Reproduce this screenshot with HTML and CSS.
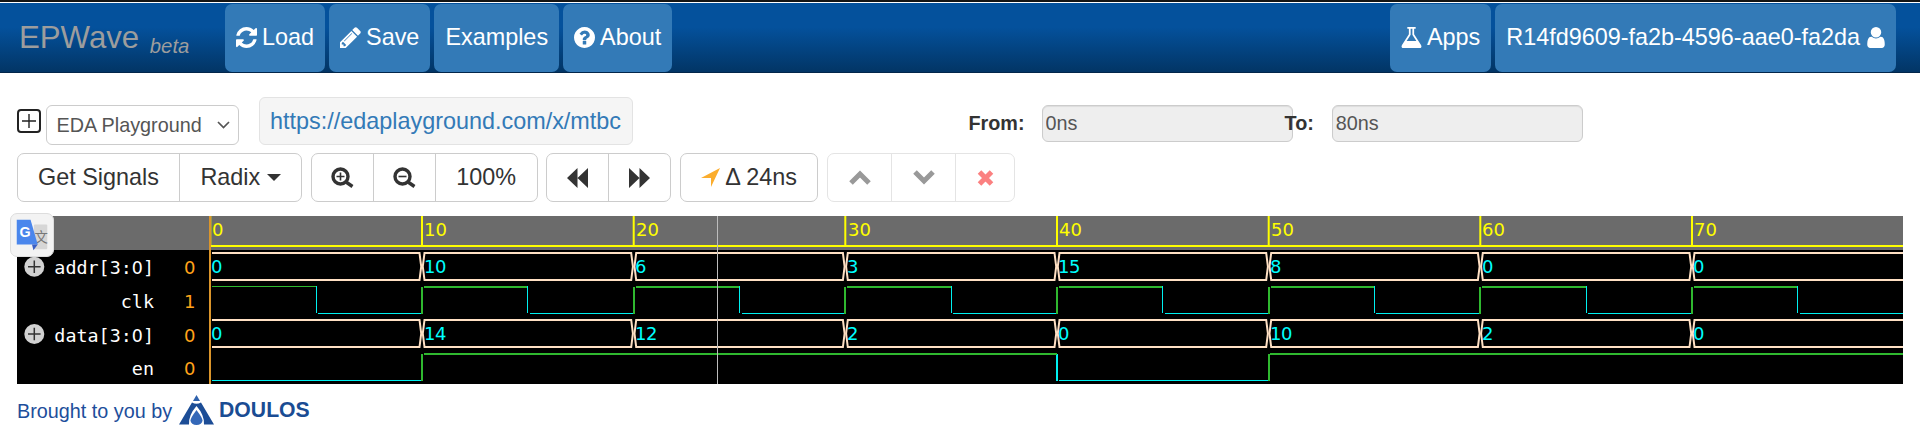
FILE: index.html
```html
<!DOCTYPE html>
<html lang="en">
<head>
    <meta charset="UTF-8">
    <title>EPWave</title>
    <link rel="stylesheet" href="styles.css">
</head>
<body>
    <div class="top-strip"></div>
    <nav class="navbar">
        <a class="brand">EPWave <small>beta</small></a>
        <a class="nav-btn"><svg class="ico" viewBox="128 128 1536 1536"><path d="M1639 1056q0 5-1 7-64 268-268 434.500t-478 166.500q-146 0-282.500-55t-243.500-157l-129 129q-19 19-45 19t-45-19-19-45v-448q0-26 19-45t45-19h448q26 0 45 19t19 45-19 45l-137 137q71 66 161 102t187 36q134 0 250-65t186-179q11-17 53-117 8-23 30-23h192q13 0 22.500 9.500t9.500 22.500zm25-800v448q0 26-19 45t-45 19h-448q-26 0-45-19t-19-45 19-45l138-138q-148-137-349-137-134 0-250 65t-186 179q-11 17-53 117-8 23-30 23h-199q-13 0-22.500-9.500t-9.500-22.500v-7q65-268 270-434.500t480-166.500q146 0 284 55.500t245 156.500l130-129q19-19 45-19t45 19 19 45z"/></svg>Load</a>
        <a class="nav-btn"><svg class="ico" viewBox="128 128 1536 1536"><path d="M491 1536l91-91-235-235-91 91v107h128v128h107zm523-928q0-22-22-22-10 0-17 7l-542 542q-7 7-7 17 0 22 22 22 10 0 17-7l542-542q7-7 7-17zm-54-192l416 416-832 832h-416v-416zm683 96q0 53-37 90l-166 166-416-416 166-165q36-38 90-38 53 0 91 38l235 234q37 39 37 91z"/></svg>Save</a>
        <a class="nav-btn">Examples</a>
        <a class="nav-btn"><svg class="ico" viewBox="128 128 1536 1536"><path d="M1024 1376v-192q0-14-9-23t-23-9h-192q-14 0-23 9t-9 23v192q0 14 9 23t23 9h192q14 0 23-9t9-23zm256-672q0-88-55.500-163t-138.500-116-170-41q-243 0-371 213-15 24 8 42l132 100q7 6 19 6 16 0 25-12 53-68 86-92 34-24 86-24 48 0 85.500 26t37.500 59q0 38-20 61t-68 45q-63 28-115.500 86.500t-52.500 125.500v36q0 14 9 23t23 9h192q14 0 23-9t9-23q0-19 21.500-49.500t54.500-49.500q32-18 49-28.500t46-35 44.500-48 28-60.500 12.500-81zm384 192q0 209-103 385.500t-279.500 279.500-385.500 103-385.500-103-279.500-279.500-103-385.500 103-385.500 279.500-279.500 385.500-103 385.500 103 279.500 279.500 103 385.500z"/></svg>About</a>
        <div class="nav-right">
            <a class="nav-btn"><svg class="ico" viewBox="128 128 1536 1536"><path d="M1591 1448q56 89 21.500 152.500t-140.500 63.500h-1152q-106 0-140.500-63.500t21.500-152.500l503-793v-399h-64q-26 0-45-19t-19-45 19-45 45-19h512q26 0 45 19t19 45-19 45-45 19h-64v399zm-779-725l-272 429h712l-272-429-20-31v-436h-128v436z"/></svg>Apps</a>
            <a class="nav-btn user-btn">R14fd9609-fa2b-4596-aae0-fa2da<svg class="ico ico-user" viewBox="256 128 1280 1536"><path d="M1536 1399q0 109-62.500 187t-150.500 78h-854q-88 0-150.500-78t-62.500-187q0-85 8.500-160.500t31.500-152 58.500-131 94-89 134.500-34.500q131 128 313 128t313-128q76 0 134.500 34.500t94 89 58.500 131 31.500 152 8.500 160.500zm-256-887q0 159-112.500 271.500t-271.500 112.500-271.500-112.500-112.500-271.500 112.500-271.500 271.500-112.500 271.500 112.500 112.500 271.500z"/></svg></a>
        </div>
    </nav>

    <div class="content">
        <div class="load-row">
            <svg class="add-box" viewBox="0 0 24 24"><rect x="1" y="1" width="22" height="22" rx="3"/><path d="M12 5v14M5 12h14"/></svg>
            <select class="source">
                <option>EDA Playground</option>
            </select>
            <div class="share-url"><a>https://edaplayground.com/x/mtbc</a></div>
            <label class="range-label from-label">From:</label>
            <input class="range-input" type="text" value="0ns" readonly>
            <label class="range-label to-label">To:</label>
            <input class="range-input" type="text" value="80ns" readonly>
        </div>

        <div class="toolbar">
            <div class="btn-group">
                <button class="signals-btn">Get Signals</button>
                <button>Radix <span class="caret"></span></button>
            </div>
            <div class="btn-group">
                <button class="zoom-btn"><svg class="tool-ico" viewBox="0 0 23 21"><circle cx="9.500" cy="9.500" r="7.500"/><path class="thin" d="M9.500 5.500v8M5.500 9.500h8"/><path d="M15 15l6.500 4.500"/></svg></button>
                <button class="zoom-btn"><svg class="tool-ico" viewBox="0 0 23 21"><circle cx="9.500" cy="9.500" r="7.500"/><path class="thin" d="M5.500 9.500h8"/><path d="M15 15l6.500 4.500"/></svg></button>
                <button>100%</button>
            </div>
            <div class="btn-group">
                <button class="skip-btn"><svg class="skip-ico" viewBox="0 0 21 20"><path d="M10.500 0v20L0 10zM21 0v20L10.500 10z"/></svg></button>
                <button class="skip-btn"><svg class="skip-ico" viewBox="0 0 21 20"><path d="M0 0v20l10.500-10zM10.500 0v20L21 10z"/></svg></button>
            </div>
            <div class="btn-group">
                <button><svg class="send-ico" viewBox="0 0 19 19"><path d="M19 0L0 10h10v9z"/></svg>&Delta; 24ns</button>
            </div>
            <div class="btn-group disabled">
                <button><svg class="chev-ico" viewBox="0 0 22 15"><path d="M2 13l9-9 9 9"/></svg></button>
                <button><svg class="chev-ico" viewBox="0 0 22 15"><path d="M2 2l9 9 9-9"/></svg></button>
                <button><svg class="cross-ico" viewBox="0 0 17 16"><path d="M2.500 2l12 12M14.500 2l-12 12"/></svg></button>
            </div>
        </div>

        <div class="wave-wrap">
            <svg class="wave" width="1886" height="168" viewBox="17 216 1886 168">
                <defs>
                    <g id="ticks">
                        <rect x="-1" y="216" width="2" height="30"/>
                        <path d="M21.200 236v9M42.300 236v9M63.500 236v9M84.700 236v9M105.800 236v9M127 236v9M148.200 236v9M169.300 236v9M190.500 236v9"/>
                    </g>
                    <g id="seg" class="bus">
                        <path d="M2.500 253H209.200L210.900 266.500 209.200 280H2.500L.8 266.500z"/>
                    </g>
                    <g id="seg-first" class="bus">
                        <path d="M212 253H419.500L421.200 266.500 419.500 280H212"/>
                    </g>
                    <g id="seg-last" class="bus">
                        <path d="M1903 253H1694.500L1692.800 266.500 1694.500 280H1903"/>
                    </g>
                    <g id="clk">
                        <path class="sig-hi" d="M0 287v27M2 286.500H105.800"/>
                        <path class="sig-lo" d="M105.800 286v27M107.800 313.500H211.700"/>
                    </g>
                </defs>

                <rect class="ruler-bg" x="17" y="216" width="1886" height="34"/>
                <rect class="wave-bg" x="17" y="250" width="1886" height="134"/>

                <!-- ruler -->
                <g class="ruler">
                    <rect x="210" y="245" width="1693" height="2"/>
                    <use href="#ticks" x="210.300"/><use href="#ticks" x="422"/><use href="#ticks" x="633.700"/><use href="#ticks" x="845.300"/>
                    <use href="#ticks" x="1057"/><use href="#ticks" x="1268.700"/><use href="#ticks" x="1480.300"/><use href="#ticks" x="1692"/>
                    <text x="212" y="236">0</text><text x="424" y="236">10</text><text x="636" y="236">20</text><text x="848" y="236">30</text>
                    <text x="1059" y="236">40</text><text x="1271" y="236">50</text><text x="1482" y="236">60</text><text x="1694" y="236">70</text>
                </g>

                <!-- signal names and values at the cursor -->
                <g class="expand">
                    <circle cx="34.300" cy="266.700" r="10"/><path d="M28 266.700h12.600M34.300 260.500v12.500"/>
                    <circle cx="34.300" cy="334" r="10"/><path d="M28 334h12.600M34.300 327.700v12.500"/>
                </g>
                <g class="sig-name">
                    <text x="154" y="274">addr[3:<tspan class="plain-zero">0</tspan>]</text>
                    <text x="154" y="308">clk</text>
                    <text x="154" y="342">data[3:<tspan class="plain-zero">0</tspan>]</text>
                    <text x="154" y="375">en</text>
                </g>
                <g class="sig-val">
                    <text x="184" y="274">0</text>
                    <text x="184" y="308">1</text>
                    <text x="184" y="342">0</text>
                    <text x="184" y="375">0</text>
                </g>

                <!-- addr[3:0] -->
                <use href="#seg-first"/><use href="#seg" x="422"/><use href="#seg" x="633.700"/><use href="#seg" x="845.300"/>
                <use href="#seg" x="1057"/><use href="#seg" x="1268.700"/><use href="#seg" x="1480.300"/><use href="#seg-last"/>
                <g class="bus-val">
                    <text x="211" y="273">0</text><text x="424" y="273">10</text><text x="635" y="273">6</text><text x="847" y="273">3</text>
                    <text x="1058" y="273">15</text><text x="1270" y="273">8</text><text x="1482" y="273">0</text><text x="1693" y="273">0</text>
                </g>

                <!-- clk -->
                <path class="sig-hi" d="M212 286.500H316"/>
                <path class="sig-lo" d="M316 286v27M318 313.500H422"/>
                <use href="#clk" x="422"/><use href="#clk" x="633.700"/><use href="#clk" x="845.300"/><use href="#clk" x="1057"/>
                <use href="#clk" x="1268.700"/><use href="#clk" x="1480.300"/><use href="#clk" x="1692"/>

                <!-- data[3:0] -->
                <g transform="translate(0 67)">
                    <use href="#seg-first"/><use href="#seg" x="422"/><use href="#seg" x="633.700"/><use href="#seg" x="845.300"/>
                    <use href="#seg" x="1057"/><use href="#seg" x="1268.700"/><use href="#seg" x="1480.300"/><use href="#seg-last"/>
                    <g class="bus-val">
                        <text x="211" y="273">0</text><text x="424" y="273">14</text><text x="635" y="273">12</text><text x="847" y="273">2</text>
                        <text x="1058" y="273">0</text><text x="1270" y="273">10</text><text x="1482" y="273">2</text><text x="1693" y="273">0</text>
                    </g>
                </g>

                <!-- en -->
                <path class="sig-lo" d="M212 380.500H422M1059 380.500H1268.700"/>
                <path class="sig-lo wide" d="M1057 354v27"/>
                <path class="sig-hi wide" d="M422 354v27M1268.700 354v27"/>
                <path class="sig-hi wide" d="M424 354H1057M1270 354H1903"/>

                <rect class="zero-line" x="209" y="216" width="2" height="168"/>
                <rect class="cursor" x="717" y="216" width="1" height="168"/>
            </svg>

            <div class="translate-badge">
                <svg viewBox="0 0 44 44" width="42" height="42">
                    <rect x="24" y="11" width="14" height="26" rx="1" fill="#d6d6d6"/>
                    <text class="wen" x="24.500" y="29">文</text>
                    <path d="M6 6h14.500L28 32H6z" fill="#4a86ec"/>
                    <path d="M22 32h6l-4.500 6z" fill="#3a5fc4"/>
                    <text class="gee" x="9" y="24">G</text>
                </svg>
            </div>
        </div>

        <div class="credit">
            <span class="credit-text">Brought to you by</span>
            <svg class="logo" viewBox="0 0 35 30">
                <path d="M17.500 0L14 6h7z" fill="#2f62ad"/>
                <path d="M13 7.500L0 29.500h10Q9.500 20 17.500 11 25.500 20 25 29.500h10L22 7.500Q17.500 10 13 7.500z" fill="#1c4d96"/>
                <path d="M17.500 15Q11.500 23 11.500 25.500A6 4.500 0 0 0 23.500 25.500Q23.500 23 17.500 15z" fill="#3468b8"/>
            </svg>
            <span class="logo-word">DOULOS</span>
        </div>
    </div>
</body>
</html>
```

FILE: styles.css
```css
body {
    margin: 0;
    font-family: "Liberation Sans", Arial, sans-serif;
    font-size: 18.2px;
    color: #333;
    background: #fff;
    overflow: hidden;
}
.top-strip {
    height: 1px;
    background: #fff;
    border-top: 2px solid #151515;
}

/* navbar */
.navbar {
    display: flex;
    height: 68px;
    padding-top: 1px;
    gap: 4px;
    background: linear-gradient(#04519c 0%, #04519c 35%, #023565 100%);
    border-bottom: 1px solid #02264a;
}
.brand {
    width: 221px;
    padding: 16px 0 0 19px;
    box-sizing: border-box;
    font-size: 31.2px;
    color: #9d9d9d;
}
.brand small {
    position: relative;
    top: 5px;
    font-size: 20.3px;
    font-style: italic;
    margin-left: 2px;
}
.nav-btn {
    display: flex;
    align-items: center;
    padding: 0 11px 2px;
    background: #337ab7;
    color: #fff;
    font-size: 23.4px;
    border-radius: 7px;
}
.ico {
    width: 21px;
    height: 21px;
    fill: currentColor;
    margin-right: 5px;
}
.ico-user {
    width: 18px;
    margin: 0 0 0 7px;
}
.nav-right {
    display: flex;
    gap: 4px;
    margin-left: auto;
    margin-right: 24px;
}
.user-btn {
    padding-right: 11px;
}

/* main area */
.content {
    padding-left: 17px;
    width: 1886px;
}
.load-row {
    display: flex;
    align-items: flex-end;
    height: 48px;
    margin-top: 24px;
}
.add-box {
    width: 24px;
    height: 24px;
    margin-bottom: 12px;
    fill: none;
    stroke: #222;
}
.add-box rect {
    stroke-width: 2px;
}
.add-box path {
    stroke-width: 1.4px;
}
.source {
    width: 193px;
    height: 40px;
    margin-left: 4.5px;
    padding-left: 10px;
    appearance: none;
    background: #fff url("data:image/svg+xml,%3Csvg xmlns='http://www.w3.org/2000/svg' width='13' height='8'%3E%3Cpath d='M1 1l5.500 5.500L12 1' fill='none' stroke='%23555' stroke-width='1.700'/%3E%3C/svg%3E") no-repeat right 8px center;
    border: 1px solid #ccc;
    border-radius: 6px;
    color: #555;
    font: 19.8px "Liberation Sans", Arial, sans-serif;
}
.share-url {
    width: 374px;
    height: 48px;
    box-sizing: border-box;
    margin-left: 20.5px;
    padding: 0 10px;
    line-height: 46px;
    font-size: 23.4px;
    white-space: nowrap;
    background: #f5f5f5;
    border: 1px solid #e3e3e3;
    border-radius: 6px;
}
.share-url a {
    color: #337ab7;
}
.range-label {
    align-self: flex-start;
    margin-top: 15px;
    font-size: 19.8px;
    font-weight: bold;
    position: relative;
}
.from-label {
    margin-left: 335.5px;
}
.to-label {
    margin-left: -8px;
}
.range-input {
    width: 251px;
    height: 37px;
    box-sizing: border-box;
    margin: 0 0 3px 17px;
    padding: 0 3px;
    color: #555;
    font: 19.8px "Liberation Sans", Arial, sans-serif;
    background: #eee;
    border: 1px solid #ccc;
    border-radius: 6px;
    box-shadow: inset 0 1px 1px rgba(0, 0, 0, .075);
    outline: none;
}
.to-label + .range-input {
    width: 251px;
    margin-left: 18px;
}

/* toolbar */
.toolbar {
    display: flex;
    gap: 8.6px;
    margin-top: 8px;
}
.btn-group {
    display: flex;
    height: 49px;
    box-sizing: border-box;
    border: 1px solid #ccc;
    border-radius: 7px;
    background: #fff;
}
.btn-group button {
    display: flex;
    align-items: center;
    padding: 0 20.5px;
    font: 23.4px "Liberation Sans", Arial, sans-serif;
    color: #333;
    background: transparent;
    border: 0;
    border-left: 1px solid #ccc;
    white-space: pre;
}
.btn-group button:first-child {
    border-left: 0;
}
.btn-group .signals-btn {
    padding: 0 20px;
}
.btn-group .zoom-btn {
    padding: 0 19px;
}
.btn-group .skip-btn {
    padding: 0 20px;
}
.disabled {
    border-color: #e4e4e4;
}
.disabled button {
    border-left-color: #e4e4e4;
}
.caret {
    width: 0;
    height: 0;
    border-top: 7px solid #333;
    border-left: 7px solid transparent;
    border-right: 7px solid transparent;
}
.tool-ico {
    width: 23px;
    height: 21px;
    fill: none;
    stroke: #333;
    stroke-width: 3.4px;
}
.tool-ico .thin {
    stroke-width: 1.6px;
}
.skip-ico {
    width: 21px;
    height: 20px;
    fill: #333;
}
.send-ico {
    width: 19px;
    height: 19px;
    margin-right: 5px;
    fill: #fbad2d;
}
.chev-ico {
    width: 22px;
    height: 15px;
    fill: none;
    stroke: #999;
    stroke-width: 5px;
}
.cross-ico {
    width: 17px;
    height: 16px;
    fill: none;
    stroke: #fb8080;
    stroke-width: 5px;
}

/* waveform */
.wave-wrap {
    position: relative;
    margin-top: 14px;
    height: 168px;
}
.wave {
    display: block;
    font-family: "DejaVu Sans", sans-serif;
    font-size: 18px;
}
.ruler-bg {
    fill: #6b6b6b;
}
.wave-bg {
    fill: #000;
}
.ruler {
    fill: #ffff00;
    stroke: none;
}
.ruler path {
    stroke: #ffff00;
    stroke-width: 2px;
    shape-rendering: crispEdges;
}
.ruler rect {
    shape-rendering: crispEdges;
}
.expand circle {
    fill: #d2d2d2;
}
.expand path {
    stroke: #333;
    stroke-width: 1.5px;
}
.sig-name {
    fill: #fff;
    text-anchor: end;
    font-family: "DejaVu Sans Mono", monospace;
    font-size: 18.4px;
}
.plain-zero {
    font-family: "DejaVu Sans", sans-serif;
    font-size: 17.4px;
}
.sig-val {
    fill: #ffa31a;
}
.bus path {
    fill: none;
    stroke: #ffe0c4;
    stroke-width: 2px;
}
.bus-val {
    fill: #00ffff;
    letter-spacing: -.5px;
}
.sig-hi, .sig-lo {
    fill: none;
    stroke-width: 1px;
    shape-rendering: crispEdges;
}
.sig-hi {
    stroke: #2fb82f;
}
.sig-lo {
    stroke: #00f0f0;
}
#clk path:first-child, .wide {
    stroke-width: 2px;
}
#clk .sig-lo {
    stroke-width: 1px;
}
.zero-line {
    fill: #db952b;
}
.cursor {
    fill: #bdbdbd;
}
.translate-badge {
    position: absolute;
    left: -7px;
    top: -3px;
    width: 44px;
    height: 44px;
    box-sizing: border-box;
    background: #f3f3f3;
    border: 1px solid #ddd;
    border-radius: 7px;
}
.translate-badge svg {
    display: block;
}
.wen {
    font-family: "Noto Sans CJK SC", sans-serif;
    font-size: 14px;
    fill: #777;
}
.gee {
    font-family: "Liberation Sans", sans-serif;
    font-size: 15px;
    font-weight: bold;
    fill: #fff;
}

/* footer */
.credit {
    display: flex;
    align-items: center;
    height: 30px;
    margin-top: 11px;
    font-size: 19.8px;
    color: #1d4e9b;
}
.credit-text {
    padding-top: 2px;
}
.logo {
    width: 35px;
    height: 30px;
    margin-left: 7px;
}
.logo-word {
    margin-left: 5px;
    font-size: 21.2px;
    font-weight: bold;
    color: #1a4c93;
}
```
